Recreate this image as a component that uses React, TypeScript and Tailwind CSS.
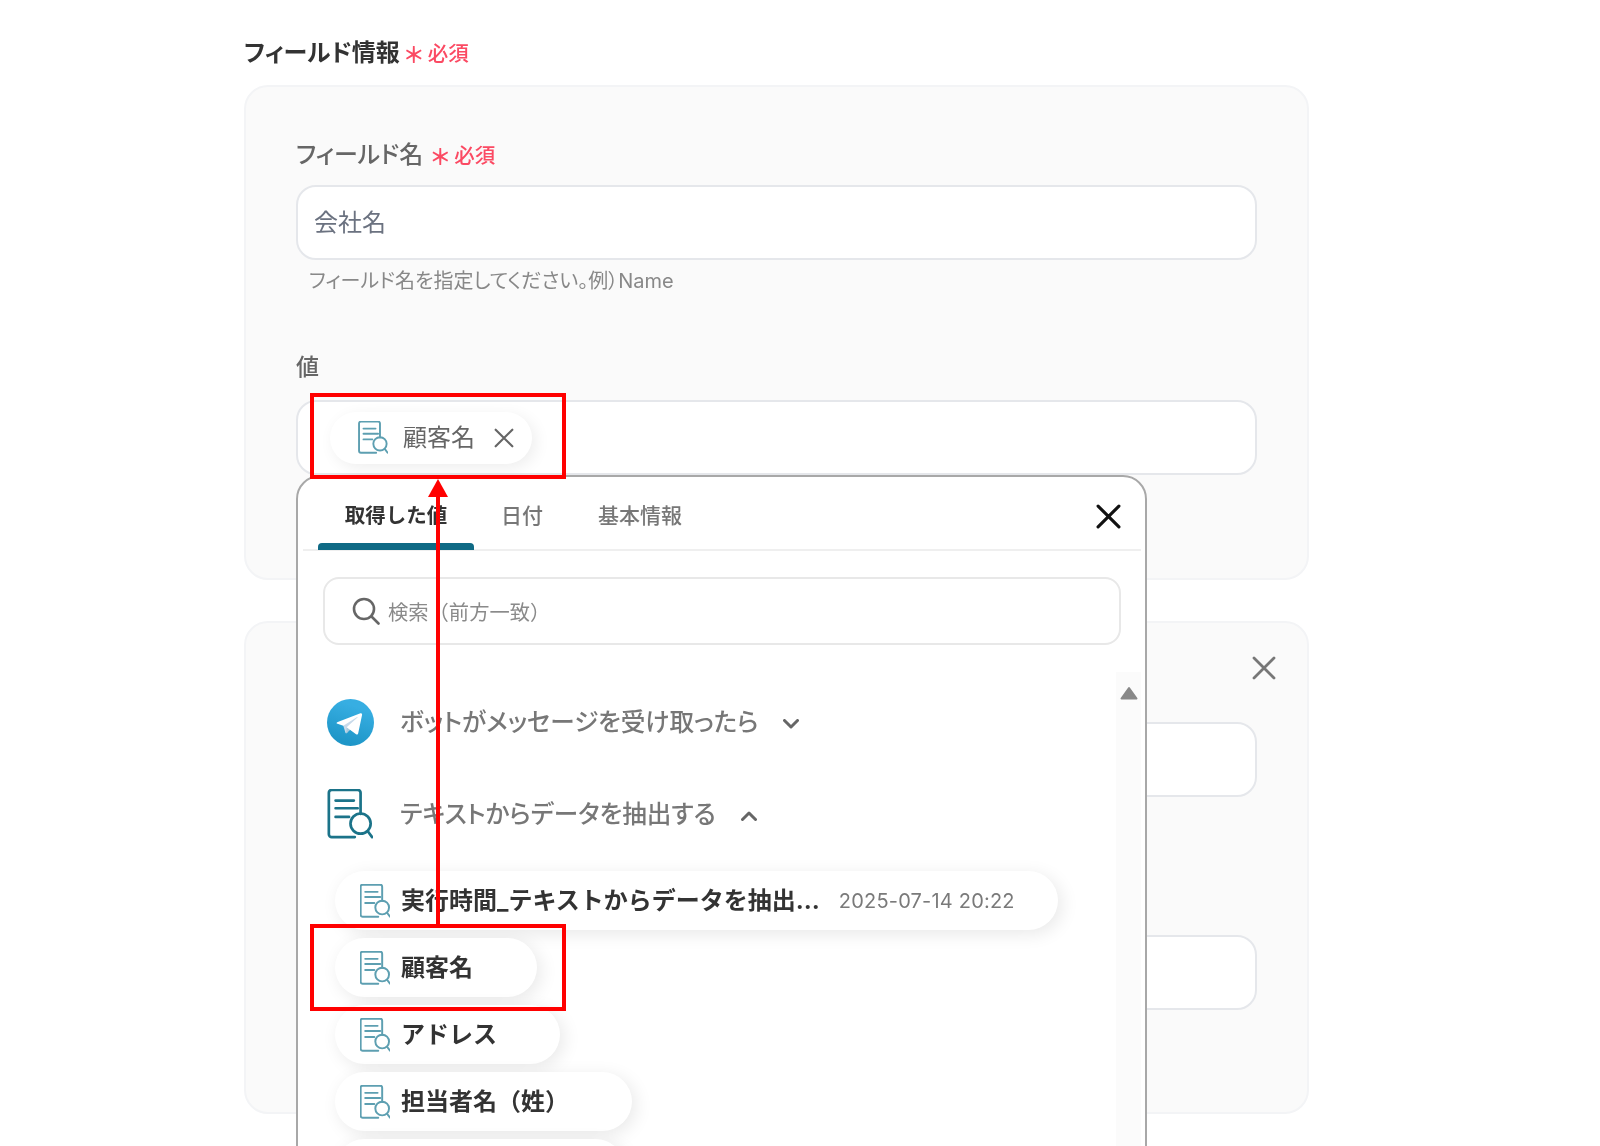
const FONT = "font-['Inter','Noto_Sans_CJK_JP',sans-serif]";
const PALT = "[font-feature-settings:'palt']";

function DocIcon({ className, color = "#1b7389", sw = 3 }: { className: string; color?: string; sw?: number }) {
  return (
    <svg viewBox="0 0 46 52" fill="none" stroke={color} strokeWidth={sw} strokeLinecap="round" strokeLinejoin="round" className={className}>
      <path d="M34 26V4a3 3 0 0 0-3-3H4a3 3 0 0 0-3 3v43a3 3 0 0 0 3 3h24" />
      <path d="M8 12h19M8 20h23M8 29h14" />
      <circle cx="34" cy="36" r="10.5" />
      <path d="M41.5 44l4.5 6" />
    </svg>
  );
}

function Telegram() {
  return (
    <svg viewBox="0 0 240 240" className="w-[47px] h-[47px] shrink-0">
      <defs>
        <linearGradient id="tg" x1="0.66" y1="0.17" x2="0.42" y2="0.92">
          <stop offset="0" stopColor="#37aee2" />
          <stop offset="1" stopColor="#1e96c8" />
        </linearGradient>
      </defs>
      <circle cx="120" cy="120" r="120" fill="url(#tg)" />
      <path d="M98 175c-3.9 0-3.2-1.5-4.6-5.2L82 132.2 152.8 88l8.3 2.2-6.9 18.8L98 175z" fill="#c8daea" />
      <path d="M98 175c3 0 4.3-1.4 6-3 2.6-2.5 36-35 36-35l-20.5-5-19 12-2.5 30v1z" fill="#a9c9dd" />
      <path d="M100 144.4l48.4 35.7c5.5 3 9.5 1.5 10.9-5.1L179 82.2c2-8.1-3.1-11.7-8.4-9.3L55 117.5c-7.9 3.2-7.8 7.6-1.4 9.5l29.7 9.3L152 93c3.2-2 6.2-.9 3.8 1.3L100 144.4z" fill="#fff" />
    </svg>
  );
}

function Cross({ className, color, width = 2.6 }: { className: string; color: string; width?: number }) {
  return (
    <svg viewBox="0 0 24 24" fill="none" stroke={color} strokeWidth={width} strokeLinecap="round" className={className}>
      <path d="M2 2l20 20M22 2L2 22" />
    </svg>
  );
}

function Required({ shift }: { shift: string }) {
  return (
    <span className={`flex items-center text-[#fb4a63] text-[20.5px] font-medium leading-none mt-[2px] ${shift}`}>
      <span className="text-[22px] font-bold mt-[2px] w-[22px] mr-[3px] text-center">＊</span>
      <span>必須</span>
    </span>
  );
}

function Input({ children }: { children?: React.ReactNode }) {
  return (
    <div className="h-[75px] rounded-[20px] border-2 border-[#e5e7eb] bg-white flex items-center px-4 text-[24px] text-[#6b7280]">
      {children}
    </div>
  );
}

function Pill({ label, extra, w }: { label: string; extra?: string; w: string }) {
  return (
    <div className={`h-[59px] shrink-0 rounded-full bg-white shadow-[4px_4px_18px_rgba(0,0,0,0.09)] flex items-center pl-[25px] ${w}`}>
      <DocIcon className="w-[30px] h-[34px] shrink-0 mt-[1px]" color="#5d9fb1" />
      <span className="ml-[11px] text-[24px] font-bold text-[#333] leading-none whitespace-nowrap">{label}</span>
      {extra && <span className="ml-[19px] text-[20px] text-[#7a7a7a] tracking-[0.2px] leading-none whitespace-nowrap">{extra}</span>}
    </div>
  );
}

export default function App() {
  return (
    <div className={`relative h-[1146px] w-[1600px] overflow-hidden bg-white blur-[0.4px] ${FONT}`}>
      <div className="ml-[244px] w-[1065px] pt-[36px]">
        <div className="h-[34px] mb-[15px] flex items-center">
          <span className={`text-[24px] font-bold text-[#333] leading-none ${PALT}`}>フィールド情報</span>
          <Required shift="ml-[3px]" />
        </div>

        <section className="h-[495px] rounded-[24px] border-2 border-[#f3f4f6] bg-[#fafafa] px-[50px] pt-[52px]">
          <div className="h-[32px] flex items-center mb-[14px]">
            <span className={`text-[24px] font-medium text-[#666] leading-none ${PALT}`}>フィールド名</span>
            <Required shift="ml-[6px]" />
          </div>
          <Input>会社名</Input>
          <p className={`mt-[9px] ml-[13px] text-[20px] leading-[24px] text-[#888] ${PALT}`}>フィールド名を指定してください。例）Name</p>
          <div className="mt-[58px] mb-[17px] text-[23px] font-medium text-[#666] leading-[32px] h-[32px]">値</div>
          <Input>
            <div className="h-[52px] w-[202px] ml-[16px] rounded-full bg-white shadow-[4px_4px_16px_rgba(0,0,0,0.07)] flex items-center pl-[28px]">
              <DocIcon className="w-[30px] h-[33px] shrink-0" color="#5d9fb1" />
              <span className="ml-[15px] text-[24px] text-[#666] leading-none">顧客名</span>
              <Cross className="ml-[19px] w-[20px] h-[20px]" color="#666" />
            </div>
          </Input>
        </section>

        <section className="relative mt-[41px] h-[493px] rounded-[24px] border-2 border-[#f3f4f6] bg-[#fafafa] px-[50px] pt-[99px]">
          <Cross className="absolute right-[31px] top-[33px] w-[24px] h-[24px]" color="#777" width={2.8} />
          <Input />
          <div className="h-[138px]" />
          <Input />
        </section>
      </div>

      {/* variable picker popup */}
      <div className="absolute left-[296px] top-[475px] w-[851px] h-[720px] rounded-t-[24px] border-2 border-[#a8a8a8] bg-white">
        <div className="relative ml-[5px] mr-[4px] h-[74px] border-b-2 border-[#efefef] flex pl-[15px] text-[21px] leading-none">
          <div className="relative w-[156px] flex items-center justify-center text-[20.5px] font-bold text-[#333] pt-[6px]">
            取得した値
            <div className="absolute left-0 right-0 bottom-[-1px] h-[7px] rounded-t-[4px] bg-[#0f6a85]" />
          </div>
          <div className="ml-[27px] flex items-center font-medium text-[#777] pt-[4px]">日付</div>
          <div className="ml-[55px] flex items-center font-medium text-[#777] pt-[4px]">基本情報</div>
          <Cross className="absolute right-[20px] top-[27px] w-[25px] h-[25px]" color="#111" width={3} />
        </div>

        <div className="mt-[26px] ml-[25px] w-[798px] h-[68px] rounded-[16px] border-2 border-[#e8e8e8] flex items-center pl-[27px]">
          <svg viewBox="0 0 28 28" fill="none" stroke="#666" strokeWidth="2.6" strokeLinecap="round" className="w-[28px] h-[28px] shrink-0">
            <circle cx="12" cy="12" r="10" />
            <path d="M20 20l6.5 6.5" />
          </svg>
          <span className="ml-[8px] pt-[4px] text-[20.3px] text-[#8a8a8a] leading-none">検索（前方一致）</span>
        </div>

        <div className="mt-[25px] flex">
          <div className="flex-1 min-w-0">
            <div className="mt-[28px] ml-[29px] h-[48px] flex items-center">
              <Telegram />
              <span className={`ml-[26px] text-[24.6px] font-medium text-[#777] leading-none ${PALT}`}>ボットがメッセージを受け取ったら</span>
              <svg viewBox="0 0 16 10" fill="none" stroke="#666" strokeWidth="3" strokeLinecap="round" strokeLinejoin="round" className="ml-[25px] w-[16px] h-[10px] mt-[3px]">
                <path d="M1.5 1.5L8 8l6.5-6.5" />
              </svg>
            </div>
            <div className="mt-[43px] ml-[29px] h-[50px] flex items-center">
              <DocIcon className="w-[46px] h-[50px] shrink-0" sw={2.8} />
              <span className={`ml-[27px] text-[24.6px] font-medium text-[#777] leading-none ${PALT}`}>テキストからデータを抽出する</span>
              <svg viewBox="0 0 16 10" fill="none" stroke="#666" strokeWidth="3" strokeLinecap="round" strokeLinejoin="round" className="ml-[25px] w-[16px] h-[10px] mt-[3px]">
                <path d="M1.5 8.5L8 2l6.5 6.5" />
              </svg>
            </div>
            <div className="mt-[32px] ml-[37px] flex flex-col items-start gap-[8px]">
              <Pill w="w-[723px]" label="実行時間_テキストからデータを抽出..." extra="2025-07-14 20:22" />
              <Pill w="w-[202px]" label="顧客名" />
              <Pill w="w-[225px]" label="アドレス" />
              <Pill w="w-[297px]" label="担当者名（姓）" />
              <Pill w="w-[290px]" label="" />
            </div>
          </div>
          <div className="w-[25px] h-[500px] mt-[2px] mr-[4px] bg-[#fbfbfb] flex justify-center pt-[14px]">
            <svg viewBox="0 0 18 14" className="w-[18px] h-[14px]">
              <path d="M9 2L16.5 12.5H1.5z" fill="#888" stroke="#888" strokeWidth="2" strokeLinejoin="round" />
            </svg>
          </div>
        </div>
      </div>

      {/* annotation overlays */}
      <div className="absolute left-[310px] top-[393px] w-[256px] h-[86px] border-[4px] border-[#ff0000]" />
      <div className="absolute left-[310px] top-[924px] w-[256px] h-[87px] border-[4px] border-[#ff0000]" />
      <div className="absolute left-[436px] top-[496px] w-[4px] h-[430px] bg-[#ff0000]" />
      <svg viewBox="0 0 20 18" className="absolute left-[428px] top-[479px] w-[20px] h-[18px]">
        <path d="M10 0l10 18H0z" fill="#ff0000" />
      </svg>
    </div>
  );
}
